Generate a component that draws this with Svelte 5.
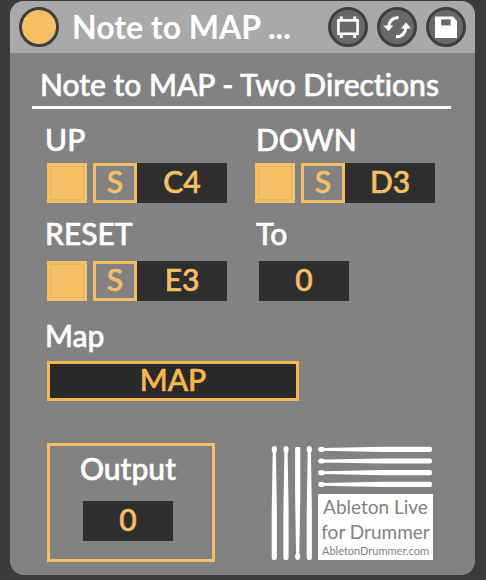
<script>
  let notes = $state([
    { id: "up", label: "UP", value: "C4", on: true },
    { id: "down", label: "DOWN", value: "D3", on: true },
    { id: "reset", label: "RESET", value: "E3", on: true },
  ]);

  let enabled = $state(true);
  let resetTo = $state("0");
  let output = $state("0");

  const uprightSticks = [3.3, 15, 38.3];
  const flatSticks = [3.3, 15, 26.7, 38.3];
</script>

<main class="device">
  <header>
    <button
      class="round power"
      class:off={!enabled}
      aria-label="Device on"
      aria-pressed={enabled}
      onclick={() => (enabled = !enabled)}
    ></button>
    <h1>Note to MAP ...</h1>
    <button class="round" aria-label="Edit device">
      <svg viewBox="0 0 40 40">
        <rect x="10.4" y="13.4" width="19.2" height="13.4" fill="none" stroke="#fff" stroke-width="2.6" />
        <path d="M13.3 9.4v4M26.7 9.4v4M13.3 27v4M26.7 27v4" stroke="#fff" stroke-width="3" />
      </svg>
    </button>
    <button class="round" aria-label="Hot swap">
      <svg viewBox="0 0 40 40">
        <path d="M21.5 10.5C15.5 10.5 12.5 14 11.6 19.5" fill="none" stroke="#fff" stroke-width="3" />
        <path d="M6.2 18.6h10l-4.6 5.6z" fill="#fff" />
        <path d="M19 29.8C25.5 29.8 28.2 26 29 20.5" fill="none" stroke="#fff" stroke-width="3" />
        <path d="M34 21.4H24l5-5.8z" fill="#fff" />
      </svg>
    </button>
    <button class="round" aria-label="Save preset">
      <svg viewBox="0 0 40 40">
        <path d="M9 9.5h18l4 4.5v17H9z" fill="#fff" />
        <rect x="15.2" y="12.4" width="9.4" height="6" fill="#696969" />
      </svg>
    </button>
  </header>

  <div class="body">
    <h2>Note to MAP - Two Directions</h2>

    <div class="grid">
      {#each notes as note (note.id)}
        <div class="cell">
          <label for={note.id}>{note.label}</label>
          <div class="controls">
            <button
              class="toggle"
              class:on={note.on}
              aria-label="{note.label} on"
              aria-pressed={note.on}
              onclick={() => (note.on = !note.on)}
            ></button>
            <button class="learn">S</button>
            <input id={note.id} bind:value={note.value} />
          </div>
        </div>
      {/each}

      <div class="cell">
        <label for="to">To</label>
        <input class="indent" id="to" bind:value={resetTo} />
      </div>

      <div class="cell wide">
        <label for="map">Map</label>
        <button class="map" id="map">MAP</button>
      </div>

      <div class="output">
        <label for="output">Output</label>
        <input id="output" bind:value={output} />
      </div>

      <div class="logo">
        <svg class="upright" viewBox="0 0 42 114">
          {#each uprightSticks as x}
            <g transform="translate({x} 0)">
              <ellipse cx="0" cy="3.5" rx="2.6" ry="3.4" />
              <path d="M-1.6 5h3.2l1 60v47q0 2-2 2h-1.2q-2 0-2-2V65z" />
            </g>
          {/each}
          <g transform="translate(26.7 114) rotate(180)">
            <ellipse cx="0" cy="3.5" rx="2.6" ry="3.4" />
            <path d="M-1.6 5h3.2l1 60v47q0 1-1 1h-3.2q-1 0-1-1V65z" />
          </g>
        </svg>
        <svg class="flat" viewBox="0 0 115 42">
          {#each flatSticks as y}
            <g transform="translate(0 {y})">
              <ellipse cx="3.5" cy="0" rx="3.4" ry="2.6" />
              <path d="M5-1.4v2.8l60 1.2h47q2 0 2-2v-1.2q0-2-2-2H65z" />
            </g>
          {/each}
        </svg>
        <div class="plate">
          <span>Ableton Live</span>
          <span>for Drummer</span>
          <small>AbletonDrummer.com</small>
        </div>
      </div>
    </div>
  </div>
</main>

<style>
  :global(body) {
    background: #3b3b3b;
  }

  .device {
    margin: 1px 11px 5px 10px;
    border-radius: 14px;
    overflow: hidden;
    background: #828282;
    color: #fff;
    font-family: Lato, "Liberation Sans", sans-serif;
    font-size: 30px;
    font-weight: 500;
    font-variant-ligatures: none;
    line-height: 36px;
  }

  button,
  input {
    box-sizing: border-box;
    margin: 0;
    padding: 0;
    border: 0;
    border-radius: 0;
    color: #f5c065;
    font: inherit;
    text-align: center;
  }

  header {
    display: flex;
    align-items: center;
    gap: 9px;
    height: 52px;
    padding: 0 9px;
    background: #a9a9a9;
  }

  h1,
  h2 {
    margin: 0;
    line-height: 36px;
    white-space: nowrap;
  }

  h1 {
    flex: 1;
    padding-left: 4px;
    font-size: 32px;
    font-weight: 700;
  }

  h2 {
    margin-right: 12px;
    padding: 13px 0 4px 8px;
    border-bottom: 3px solid #fff;
    font-size: 30px;
    font-weight: 500;
  }

  .round {
    flex: none;
    width: 40px;
    height: 40px;
    border: 3px solid #3f3f3f;
    border-radius: 50%;
    background: #696969;
  }

  .round svg {
    display: block;
    width: 40px;
    height: 40px;
    margin: -3px;
  }

  .power {
    background: #f5c065;
  }

  .power.off {
    background: #696969;
  }

  .body {
    padding: 0 12px 13px 22px;
    -webkit-text-stroke: 0.6px;
  }

  .grid {
    display: grid;
    grid-template-columns: 1fr 1fr;
    grid-template-rows: 94px 102px 126px auto;
    padding: 12px 0 0 15px;
  }

  .cell {
    display: flex;
    flex-direction: column;
    align-items: flex-start;
    gap: 6px;
  }

  .cell:nth-child(3),
  .cell:nth-child(4) {
    gap: 10px;
  }

  .cell label {
    margin-left: -2px;
  }

  .cell:nth-child(even) label {
    margin-left: 1px;
  }

  .wide {
    grid-column: 1 / -1;
    gap: 8px;
  }

  .controls {
    display: flex;
  }

  .toggle,
  .learn {
    height: 40px;
    border: 3px solid #f5c065;
  }

  .toggle {
    width: 40px;
    margin-right: 6px;
    background: #828282;
  }

  .toggle.on {
    background: #f5c065;
    outline: 1px solid #e2b364;
    outline-offset: -4px;
  }

  .learn {
    width: 44px;
    padding-bottom: 4px;
    background: #828282;
    line-height: 30px;
  }

  input {
    width: 90px;
    height: 40px;
    padding-bottom: 4px;
    background: #2e2e2e;
  }

  .indent {
    margin-left: 4px;
  }

  .map {
    width: 252px;
    height: 40px;
    padding-bottom: 4px;
    border: 3px solid #f5b750;
    background: #292929;
    color: #f5b750;
    line-height: 30px;
  }

  .output {
    display: flex;
    flex-direction: column;
    align-items: center;
    gap: 15px;
    box-sizing: border-box;
    width: 168px;
    height: 119px;
    padding-top: 4px;
    padding-right: 6px;
    border: 3px solid #f5c065;
  }

  .logo {
    display: grid;
    grid-template-columns: 42px 115px;
    grid-template-rows: 42px 66px;
    gap: 6px 5px;
    margin: 3px 0 0 16px;
  }

  .logo svg {
    display: block;
    width: 100%;
    fill: #fff;
  }

  .upright {
    grid-row: 1 / 3;
    height: 114px;
  }

  .plate {
    display: flex;
    flex-direction: column;
    align-items: center;
    background: #fff;
    color: #828282;
    font-size: 19px;
    font-weight: 400;
    line-height: 25px;
    white-space: nowrap;
    -webkit-text-stroke: 0;
  }

  .plate small {
    font-size: 11px;
    line-height: 14px;
  }
</style>
